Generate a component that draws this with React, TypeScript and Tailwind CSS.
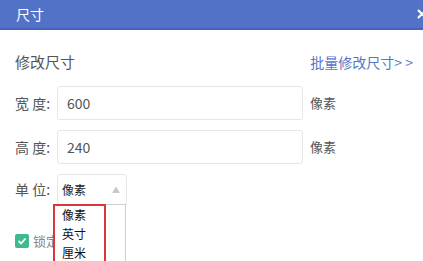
import React from "react";

const font = { fontFamily: '"Noto Sans CJK SC", "Noto Sans", sans-serif' };

export default function App() {
  return (
    <div className="w-[423px] h-[261px] bg-white overflow-hidden relative" style={font}>
      <div className="h-[30px] bg-[#5272c8] border-b-2 border-[#4863bd] flex items-center justify-between pl-[16px] overflow-hidden">
        <span className="text-white text-[14px] leading-none">尺寸</span>
        <svg width="10" height="10" viewBox="0 0 10 10" className="mr-[-4px]">
          <path d="M1 1 L9 9 M9 1 L1 9" stroke="white" strokeWidth="2.2" />
        </svg>
      </div>
      <div className="pl-[15px] pr-[10px]">
        <div className="flex items-center justify-between h-[20px] mt-[22px]">
          <span className="text-[15px] text-[#555]">修改尺寸</span>
          <span className="text-[14px] text-[#5577c9]">批量修改尺寸&gt; &gt;</span>
        </div>
        <div className="flex items-center mt-[14px] h-[34px]">
          <span className="text-[14px] text-[#555] w-[42px]">宽&nbsp;度:</span>
          <div className="w-[246px] h-[34px] border border-[#e6e6e6] rounded-[3px] flex items-center pl-[9px] text-[14px] text-[#555]">600</div>
          <span className="text-[13px] text-[#555] ml-[7px]">像素</span>
        </div>
        <div className="flex items-center mt-[10px] h-[34px]">
          <span className="text-[14px] text-[#555] w-[42px]">高&nbsp;度:</span>
          <div className="w-[246px] h-[34px] border border-[#e6e6e6] rounded-[3px] flex items-center pl-[9px] text-[14px] text-[#555]">240</div>
          <span className="text-[13px] text-[#555] ml-[7px]">像素</span>
        </div>
        <div className="flex items-center mt-[10px] h-[31px] relative">
          <span className="text-[14px] text-[#555] w-[42px]">单&nbsp;位:</span>
          <div className="w-[70px] h-[31px] border border-[#e6e6e6] rounded-[3px] flex items-center justify-between pl-[4px] pr-[6px] text-[12px] text-[#222]">
            <span>像素</span>
            <span className="text-[8px] text-[#c8c8c8]">▲</span>
          </div>
          <div className="absolute left-[38px] top-[30px] w-[73px] h-[70px] bg-white border border-[#cfcfcf] z-10">
            <div className="absolute left-[-1px] top-[-1px] w-[53px] h-[70px] border-2 border-[#d8383a]" />
            <div className="pl-[8px] text-[12px] text-[#111] leading-[19px]">
              <div>像素</div>
              <div>英寸</div>
              <div>厘米</div>
            </div>
          </div>
        </div>
        <div className="flex items-center mt-[28px] h-[15px]">
          <div className="w-[14px] h-[14px] rounded-[2px] bg-[#3dbb8c] flex items-center justify-center">
            <svg width="10" height="10" viewBox="0 0 10 10">
              <path d="M1.5 5 L4 7.5 L8.5 2.5" stroke="white" strokeWidth="1.8" fill="none" />
            </svg>
          </div>
          <span className="text-[13px] text-[#888] ml-[4px]">锁定长宽比</span>
        </div>
      </div>
    </div>
  );
}
